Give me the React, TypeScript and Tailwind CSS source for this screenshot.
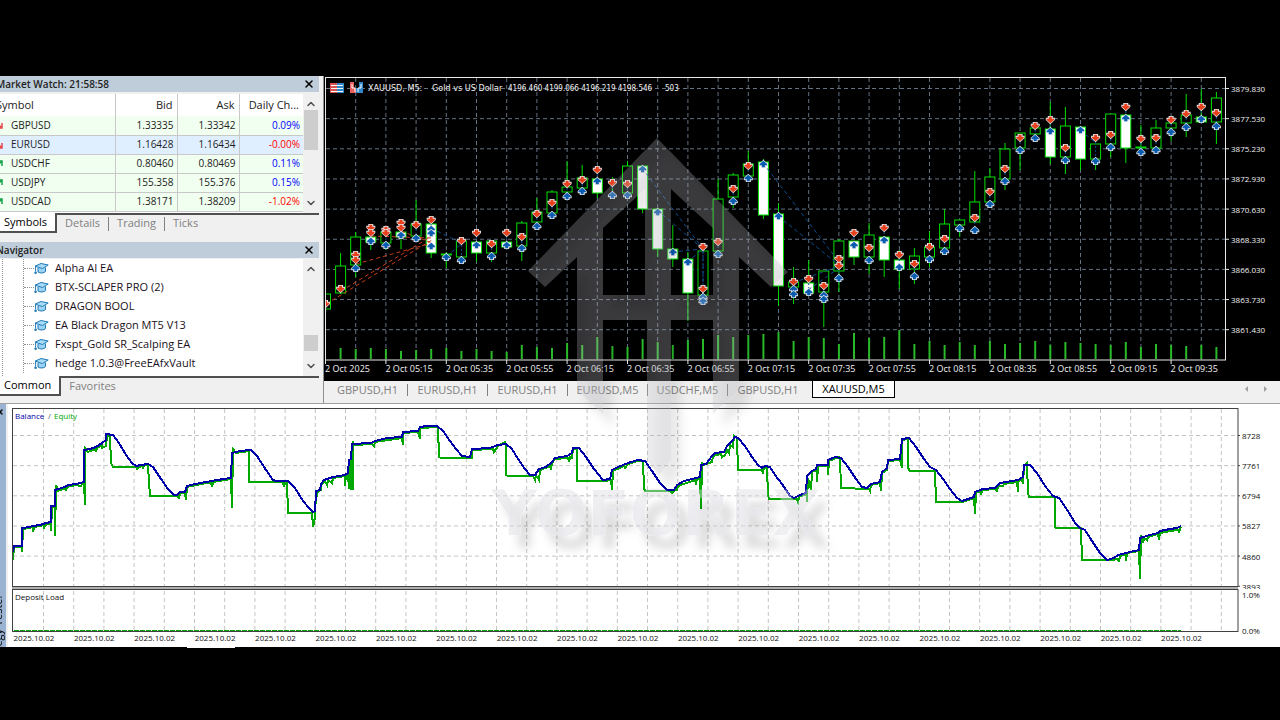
import React from 'react';
import { ChevronDown, ChevronUp, X } from 'lucide-react';
import clsx from 'clsx';

type Quote = { symbol: string; bid: string; ask: string; change: string; up: boolean; selected?: boolean };

const quotes: Quote[] = [
  { symbol: 'GBPUSD', bid: '1.33335', ask: '1.33342', change: '0.09%', up: false },
  { symbol: 'EURUSD', bid: '1.16428', ask: '1.16434', change: '-0.00%', up: false, selected: true },
  { symbol: 'USDCHF', bid: '0.80460', ask: '0.80469', change: '0.11%', up: true },
  { symbol: 'USDJPY', bid: '155.358', ask: '155.376', change: '0.15%', up: true },
  { symbol: 'USDCAD', bid: '1.38171', ask: '1.38209', change: '-1.02%', up: true },
];

const experts = [
  'Alpha AI EA',
  'BTX-SCLAPER PRO (2)',
  'DRAGON BOOL',
  'EA Black Dragon MT5 V13',
  'Fxspt_Gold SR_Scalping EA',
  'hedge 1.0.3@FreeEAfxVault',
];

const chartTabs = ['GBPUSD,H1', 'EURUSD,H1', 'EURUSD,H1', 'EURUSD,M5', 'USDCHF,M5', 'GBPUSD,H1', 'XAUUSD,M5'];

// high, body top, body bottom, low, filled, sell marks, buy marks
type Candle = [number, number, number, number, 0 | 1, number[], number[]];

const candles: Candle[] = [
  [294, 294, 309, 309, 0, [304], []],
  [253, 266, 293, 294, 0, [289], []],
  [232, 237, 265, 277, 0, [255, 260], [268]],
  [237, 237, 242, 250, 1, [228, 233], [241]],
  [232, 232, 243, 250, 0, [230, 233], [245]],
  [232, 232, 237, 249, 1, [223, 228], [235]],
  [200, 224, 236, 242, 0, [225], [238]],
  [224, 224, 253, 258, 1, [220], [229, 233, 246]],
  [252, 254, 255, 268, 0, [], [257]],
  [241, 241, 257, 257, 0, [241], [260]],
  [242, 242, 253, 262, 1, [233], [245]],
  [241, 241, 253, 262, 0, [244], [256]],
  [242, 242, 247, 247, 1, [233], [245]],
  [221, 223, 246, 261, 0, [237], [248]],
  [198, 212, 222, 222, 0, [214], [226]],
  [190, 192, 213, 217, 0, [203], [215]],
  [161, 187, 192, 192, 0, [184], [196]],
  [165, 178, 188, 188, 0, [180], [191]],
  [179, 179, 193, 198, 1, [170], [181]],
  [177, 191, 191, 191, 0, [183], [195]],
  [161, 166, 193, 193, 0, [184], [195]],
  [166, 166, 209, 213, 1, [], [169]],
  [209, 209, 249, 257, 1, [], [212]],
  [225, 249, 259, 267, 1, [], [252]],
  [252, 259, 293, 321, 1, [], [262]],
  [243, 251, 295, 300, 0, [247, 289], [297, 301]],
  [179, 199, 251, 251, 0, [242], [254]],
  [173, 175, 197, 208, 0, [189], [201]],
  [151, 164, 176, 176, 0, [166], [178]],
  [159, 162, 215, 219, 1, [], [164]],
  [203, 214, 286, 306, 1, [], [216]],
  [267, 282, 287, 304, 0, [282], [289, 294]],
  [260, 283, 293, 293, 1, [279], [292]],
  [271, 271, 292, 327, 0, [286], [295, 299]],
  [239, 241, 271, 292, 0, [259, 266], [278]],
  [241, 241, 257, 265, 1, [233], [245]],
  [223, 235, 257, 274, 0, [248], [260]],
  [237, 237, 260, 277, 1, [228], [240]],
  [250, 260, 269, 289, 1, [255], [267]],
  [248, 256, 269, 284, 0, [264], [276]],
  [231, 247, 257, 267, 0, [247], [259]],
  [209, 224, 248, 249, 0, [239], [251]],
  [220, 220, 225, 237, 0, [], [228]],
  [171, 202, 222, 222, 0, [218], [230]],
  [168, 177, 202, 202, 0, [192], [204]],
  [143, 149, 179, 190, 0, [169], [181]],
  [133, 133, 148, 170, 0, [138], [150]],
  [128, 128, 134, 134, 0, [126], [138]],
  [102, 129, 157, 164, 1, [120], [131]],
  [107, 126, 157, 174, 0, [148], [160]],
  [127, 127, 159, 170, 1, [], [130]],
  [144, 144, 159, 170, 0, [138], [161]],
  [114, 114, 144, 157, 0, [135], [147]],
  [115, 115, 148, 163, 1, [107], [118]],
  [125, 147, 148, 148, 0, [139], [152]],
  [120, 128, 148, 148, 0, [138], [150]],
  [123, 123, 128, 141, 0, [120], [132]],
  [94, 115, 123, 137, 0, [114], [127]],
  [89, 117, 122, 122, 1, [107], [119]],
  [92, 98, 122, 144, 0, [113], [126]],
];

const volumes = [
  0, 11, 10, 11, 10, 8, 9, 10, 11, 8, 10, 8, 7, 14, 12, 11, 16, 14, 22, 13, 12, 20, 17, 14, 19, 20, 24, 22, 24, 25,
  27, 18, 22, 21, 15, 26, 21, 22, 29, 15, 18, 14, 17, 14, 18, 15, 16, 18, 14, 17, 16, 15, 14, 17, 12, 15, 14, 13, 14, 12,
];

const prices = ['3879.830', '3877.530', '3875.230', '3872.930', '3870.630', '3868.330', '3866.030', '3863.730', '3861.430'];
const times = ['2025', '05:15', '05:35', '05:55', '06:15', '06:35', '06:55', '07:15', '07:35', '07:55', '08:15', '08:35', '08:55', '09:15', '09:35'];

const sellLines = ['326,304 432,240', '341,291 432,236', '356,264 432,243', '371,236 432,238', '401,231 432,243'];
const buyLines = ['431,228 463,244', '446,257 461,244', '642,168 703,249', '657,210 703,249', '672,252 703,249', '687,262 703,249', '703,250 703,298', '763,163 839,262', '778,216 839,265', '793,283 839,266', '808,290 839,268', '1080,130 1096,143'];

const balanceLine =
  '13,552 14,546 22,546 22,528 24,528 33,526 40,525 46,523 51,522 51,506 55,506 55,490 58,489 65,487 68,485 76,484 84,482 84,450 90,449 96,447 102,443 106,440 106,434 113,435 119,443 126,455 132,463 136,466 141,465 148,464 153,467 161,479 168,489 174,495 177,495 180,492 185,492 187,486 195,484 206,482 217,480 231,478 232,453 240,451 251,450 257,456 266,470 273,480 276,481 288,481 295,488 303,501 309,508 313,512 315,511 316,491 320,490 321,484 324,480 333,477 345,475 348,473 349,460 351,459 352,444 371,443 375,441 387,438 402,437 403,432 418,431 420,427 427,426 437,426 443,431 450,441 456,449 462,456 470,457 472,449 490,448 498,445 506,444 512,449 518,459 525,469 530,475 535,475 539,469 546,467 552,462 555,458 567,456 572,453 573,448 579,448 586,457 594,469 603,480 610,479 612,470 618,467 628,463 638,460 645,461 652,471 660,483 667,490 674,490 677,485 684,481 692,479 700,477 701,465 706,464 712,456 715,453 724,452 727,446 732,441 735,437 738,438 745,446 752,457 758,465 762,468 765,466 770,467 775,475 782,484 790,496 794,498 800,495 806,493 807,476 812,471 816,469 817,465 828,465 828,460 835,457 841,458 848,467 856,479 862,487 867,488 871,484 880,482 882,472 887,468 888,460 900,459 902,439 909,438 916,447 924,459 930,467 936,470 943,479 950,489 957,498 962,501 968,499 974,497 975,492 983,489 995,488 1000,483 1018,480 1023,477 1024,465 1030,465 1037,473 1045,486 1053,496 1059,498 1068,511 1075,523 1080,528 1085,530 1092,541 1100,553 1107,560 1114,558 1118,555 1130,552 1139,550 1140,538 1150,535 1158,533 1160,531 1170,529 1177,528 1181,526';

const equityLine =
  '13,560 14,547 22,547 22,552 23,529 33,527 33,532 34,527 44,525 44,529 45,525 51,523 51,531 52,507 55,507 55,536 56,485 58,491 66,488 66,491 67,487 76,485 81,486 82,484 84,483 85,505 85,448 88,452 96,449 96,452 97,448 102,445 102,448 106,446 107,436 110,436 111,463 113,467 137,467 137,470 138,467 143,466 143,469 144,465 148,465 149,482 150,496 178,496 179,499 180,493 185,493 186,500 187,487 206,483 211,483 212,487 213,482 231,479 232,508 233,449 236,453 249,451 249,482 283,482 284,487 285,482 287,482 288,513 312,513 313,527 315,517 316,492 317,495 318,491 321,490 321,485 325,481 327,485 328,480 332,483 333,478 345,476 345,486 346,475 348,474 349,489 349,460 351,460 351,489 353,489 353,441 354,445 372,444 374,446 375,442 402,438 403,445 403,433 418,432 420,439 420,428 438,427 439,457 441,458 472,458 472,450 493,449 494,452 498,446 505,442 506,446 506,475 508,476 533,476 535,480 536,475 539,480 540,470 551,466 551,470 552,463 555,459 568,458 569,462 570,457 572,458 573,449 577,449 577,481 604,481 611,480 612,490 613,471 624,466 625,468 628,464 638,461 643,461 644,488 645,491 670,491 672,493 675,490 677,490 678,486 695,480 696,483 697,479 700,478 701,509 702,462 703,465 712,462 713,456 721,454 722,457 725,455 727,450 729,453 730,445 733,447 734,436 737,438 738,470 762,470 763,474 764,467 767,468 768,495 769,499 797,499 798,502 799,497 807,494 807,502 808,478 811,490 812,472 817,470 817,482 818,466 828,466 828,475 829,461 839,457 840,458 841,488 869,489 870,491 871,485 880,483 881,491 882,473 887,470 888,461 900,460 902,468 902,440 908,439 908,468 910,471 935,471 936,502 962,502 968,500 974,498 975,514 976,493 980,491 981,495 982,490 996,489 997,492 998,486 1003,486 1004,484 1017,482 1018,492 1018,481 1022,480 1023,484 1024,466 1027,463 1028,493 1029,497 1055,497 1055,527 1056,528 1081,528 1082,560 1112,560 1118,559 1119,562 1120,556 1126,554 1126,561 1127,553 1139,551 1140,579 1141,535 1143,543 1144,538 1147,540 1148,537 1158,534 1159,540 1160,533 1170,531 1178,530 1179,532 1181,527';

const candleX = (i: number) => 325.5 + i * 15.1;
const range = (n: number) => Array.from({ length: n }, (_, i) => i);

const CapIcon = () => (
  <svg viewBox="0 0 15 13" className="h-[13px] w-[15px] shrink-0" aria-hidden="true">
    <path d="M4 6v4c2 1.500 6 1.300 7.500-.500V5.500" fill="#9bd3f5" stroke="#1f79b5" />
    <path d="M1 4.200 7 1.500 14.200 3 8.500 6.500Z" fill="#a9dcf8" stroke="#1f79b5" />
    <path d="M1.600 4.500v5" fill="none" stroke="#1f79b5" />
    <circle cx="1.600" cy="10.800" r="1.300" fill="#1f79b5" />
  </svg>
);

const TrendIcon = ({ up }: { up: boolean }) => (
  <svg viewBox="0 0 8 8" className="h-2 w-2 shrink-0" aria-hidden="true">
    <path
      d={up ? 'M1 7 7 1M2 1h5v5' : 'M1 1l6 6M2 7h5V2'}
      fill="none"
      stroke={up ? '#16a34a' : '#e5484d'}
      strokeWidth="1.5"
    />
  </svg>
);

const Mark = ({ x, y, buy }: { x: number; y: number; buy?: boolean }) => (
  <g transform={`translate(${x} ${y}) scale(1 ${buy ? -1 : 1})`}>
    <path d="M-2.500-4h5v1.800h2v2.200l-4.500 4.200-4.500-4.200v-2.200h2z" fill="#e4e9ee" />
    <path d="M-1.500-3.200h3v2h2.200v1.200l-3.700 3.200-3.700-3.200v-1.200h2.200z" fill={buy ? '#0a5cb0' : '#e8401c'} />
  </g>
);

const PanelTitle = ({ children }: { children: React.ReactNode }) => (
  <div className="flex h-4 items-center justify-between bg-[#bfcdda] px-1 text-[10px] font-semibold text-[#222]">
    <h2>{children}</h2>
    <button aria-label="Close panel">
      <X className="h-3 w-3 text-black" strokeWidth={3} />
    </button>
  </div>
);

const ScrollBar = ({ thumb }: { thumb: string }) => (
  <div className="flex w-4 shrink-0 flex-col items-center justify-between bg-[#f0f0f0] py-1">
    <ChevronUp className="h-3 w-3 text-[#505050]" strokeWidth={3} />
    <div className="flex w-full flex-1 flex-col px-px">
      <div className={clsx('w-full bg-[#cdcdcd]', thumb)} />
    </div>
    <ChevronDown className="h-3 w-3 text-[#505050]" strokeWidth={3} />
  </div>
);

const PanelTabs = ({ tabs }: { tabs: string[] }) => (
  <div className="flex h-5 items-start border-t-2 border-[#505050] text-[11px] leading-4 text-[#808080]">
    {tabs.map((tab, i) => (
      <React.Fragment key={tab}>
        {i > 1 && <span className="mt-0.5 h-3.5 w-px bg-[#808080]" />}
        <button
          className={clsx(
            i === 0 ? '-mt-0.5 h-5 border-b-2 border-r-2 border-[#505050] bg-white pl-3 pr-2 text-black' : 'h-4 px-2'
          )}
        >
          {tab}
        </button>
      </React.Fragment>
    ))}
  </div>
);

const MarketWatch = () => (
  <section className="flex flex-col">
    <PanelTitle>Market Watch: 21:58:58</PanelTitle>
    <div className="mt-0.5 flex h-[119px] overflow-hidden bg-white">
      <table className="flex-1 table-fixed border-collapse self-start text-[10px] text-[#222]">
        <thead>
          <tr className="h-[22px] text-[11px]">
            <th className="w-[123px] border-r border-[#c8c8c8] pl-1 text-left font-normal">Symbol</th>
            <th className="w-[62px] border-r border-[#c8c8c8] pr-1 text-right font-normal">Bid</th>
            <th className="w-[62px] border-r border-[#c8c8c8] pr-1 text-right font-normal">Ask</th>
            <th className="pr-1 text-right font-normal">Daily Ch...</th>
          </tr>
        </thead>
        <tbody>
          {quotes.map((q) => (
            <tr key={q.symbol} className={clsx('h-[19px] border-b border-[#c8c8c8]', q.selected ? 'bg-[#e0efff]' : 'bg-[#f0fff0]')}>
              <td className="border-r border-[#c8c8c8]">
                <span className="flex items-center gap-2 pl-[3px]">
                  <TrendIcon up={q.up} />
                  {q.symbol}
                </span>
              </td>
              <td className="border-r border-[#c8c8c8] pr-[3px] text-right">{q.bid}</td>
              <td className="border-r border-[#c8c8c8] pr-[3px] text-right">{q.ask}</td>
              <td className={clsx('pr-[3px] text-right', q.change.startsWith('-') ? 'text-[#ff0000]' : 'text-[#0000ff]')}>{q.change}</td>
            </tr>
          ))}
        </tbody>
      </table>
      <ScrollBar thumb="h-10" />
    </div>
    <PanelTabs tabs={['Symbols', 'Details', 'Trading', 'Ticks']} />
  </section>
);

const Navigator = () => (
  <section className="flex flex-col">
    <PanelTitle>Navigator</PanelTitle>
    <div className="mt-px flex h-[117px] bg-white">
      <ul className="ml-2.5 flex-1 border-l border-dotted border-[#909090] text-[11px] text-[#1a1020]">
        {experts.map((name) => (
          <li key={name} className="ml-5 flex h-[19px] items-center border-l border-dotted border-[#909090]">
            <span className="w-2.5 border-t border-dotted border-[#909090]" />
            <CapIcon />
            <span className="ml-1.5">{name}</span>
          </li>
        ))}
      </ul>
      <ScrollBar thumb="mt-15 h-4" />
    </div>
    <PanelTabs tabs={['Common', 'Favorites']} />
  </section>
);

const PriceChart = () => (
  <svg viewBox="324 76 956 305" className="block w-full bg-black" role="img" aria-label="XAUUSD M5 candlestick chart">
    <defs>
      <clipPath id="plot">
        <rect x="326" y="78" width="900" height="282" />
      </clipPath>
    </defs>
    <g stroke="#647282" strokeDasharray="4 3">
      {range(29).map((i) => (
        <line key={i} x1={355.7 + i * 30.2} x2={355.7 + i * 30.2} y1="78" y2="360" />
      ))}
      {prices.map((p, i) => (
        <line key={p} x1="326" x2="1226" y1={88.5 + i * 30.15} y2={88.5 + i * 30.15} />
      ))}
    </g>
    <g clipPath="url(#plot)">
      {volumes.map((v, i) => (
        <rect key={i} x={candleX(i) - 1} y={359 - v} width="2" height={v} fill="#28b828" />
      ))}
      {candles.map(([high, top, bottom, low, filled], i) => (
        <g key={i} stroke="#00e000">
          <line x1={candleX(i)} x2={candleX(i)} y1={high} y2={top} />
          <line x1={candleX(i)} x2={candleX(i)} y1={bottom} y2={low} />
          <rect x={candleX(i) - 5} y={top} width="10" height={bottom - top} fill={filled ? '#ffffff' : '#000000'} />
        </g>
      ))}
      <g fill="none" stroke="#c83c18" strokeDasharray="4 3">
        {sellLines.map((p) => (
          <polyline key={p} points={p} />
        ))}
      </g>
      <g fill="none" stroke="#0a4c8c" strokeDasharray="4 3">
        {buyLines.map((p) => (
          <polyline key={p} points={p} />
        ))}
      </g>
      {candles.map(([, , , , , sells, buys], i) => (
        <g key={i}>
          {sells.length > 0 && buys.length > 0 && (
            <line x1={candleX(i)} x2={candleX(i)} y1={sells[0]} y2={buys[0]} stroke="#0a4c8c" strokeDasharray="2 2" />
          )}
          {sells.map((y) => (
            <Mark key={y} x={candleX(i)} y={y} />
          ))}
          {buys.map((y) => (
            <Mark key={y} x={candleX(i)} y={y} buy />
          ))}
        </g>
      ))}
    </g>
    <rect x="325.500" y="77.500" width="900" height="282.500" fill="none" stroke="#e8e8e8" />
    <g>
      <rect x="330" y="83" width="7" height="10" fill="#d9534f" />
      <rect x="337" y="83" width="7" height="10" fill="#2f86c8" />
      <path d="M331 85.500h12M331 88.500h12M331 91.500h12" stroke="#fff" />
      <path d="M350 82h4v6h3v5h-7z" fill="#e8605c" />
      <path d="M363 82h-4v6h-3v5h7z" fill="#2f86c8" />
      <path d="M352 84v4h3v4M361 84v4h-3v4" fill="none" stroke="#fff" />
    </g>
    <g fill="#f0f0f0" className="font-['DejaVu_Sans_Condensed','DejaVu_Sans',sans-serif] text-[9px]">
      <text x="368" y="91">XAUUSD, M5:</text>
      <text x="432" y="91">Gold vs US Dollar</text>
      <text x="508" y="91" className="text-[8px]">4196.460 4199.066 4196.219 4198.546</text>
      <text x="665" y="91" className="text-[8px]">503</text>
    </g>
    <g fill="#f0f0f0">
      {prices.map((p, i) => (
        <React.Fragment key={p}>
          <line x1="1226" x2="1229" y1={88.5 + i * 30.15} y2={88.5 + i * 30.15} stroke="#e8e8e8" />
          <text x="1231" y={92 + i * 30.15} className="text-[8px]">{p}</text>
        </React.Fragment>
      ))}
      {times.map((t, i) => (
        <React.Fragment key={t}>
          <line x1={325.5 + i * 60.4} x2={325.5 + i * 60.4} y1="360" y2="364" stroke="#e8e8e8" />
          <text x={325 + i * 60.4} y="372" className="text-[9px]">2 Oct {t}</text>
        </React.Fragment>
      ))}
    </g>
  </svg>
);

const ChartTabs = () => (
  <div className="flex h-[22px] items-start justify-between bg-[#f0f0f0] text-[11px] leading-4 text-[#808080]">
    <nav className="flex items-start pl-1">
      {chartTabs.map((tab, i) => {
        const active = i === chartTabs.length - 1;
        return (
          <button
            key={i}
            className={clsx(
              'flex h-[17px] items-center justify-center',
              active ? 'ml-1 w-[83px] border border-t-0 border-black bg-white text-black' : 'w-20'
            )}
          >
            <span className="flex-1">{tab}</span>
            {i < chartTabs.length - 2 && <span className="h-3 w-px bg-[#808080]" />}
          </button>
        );
      })}
    </nav>
    <div className="flex gap-4 pr-3 pt-1">
      <button aria-label="Scroll tabs left">
        <svg viewBox="0 0 4 8" className="h-2 w-1" fill="#a0a0a0"><path d="M4 1v6L1 4z" /></svg>
      </button>
      <button aria-label="Scroll tabs right">
        <svg viewBox="0 0 4 8" className="h-2 w-1" fill="#a0a0a0"><path d="M0 1v6l3-3z" /></svg>
      </button>
    </div>
  </div>
);

const TesterChart = () => (
  <svg viewBox="8 404 1272 243" className="block w-full bg-white" role="img" aria-label="Balance and equity graph">
    <g stroke="#c4c4c4" strokeDasharray="4 3">
      {range(40).map((i) => (
        <line key={i} x1={43.5 + i * 30.2} x2={43.5 + i * 30.2} y1="409" y2="631" />
      ))}
      {range(5).map((i) => (
        <line key={i} x1="13" x2="1238" y1={435.5 + i * 30.15} y2={435.5 + i * 30.15} />
      ))}
    </g>
    <rect x="12" y="586" width="1226" height="4" fill="#b0b0b0" />
    <g fill="none" strokeWidth="2" shapeRendering="crispEdges">
      <polyline points={equityLine} stroke="#00a800" />
      <polyline points={balanceLine} stroke="#0000a8" />
    </g>
    <line x1="14" x2="1181" y1="630.500" y2="630.500" stroke="#00a800" strokeDasharray="5 1" />
    <g fill="none" stroke="#404040">
      <rect x="12.500" y="408.500" width="1225.500" height="178" />
      <rect x="12.500" y="589.500" width="1225.500" height="42" />
    </g>
    <g fill="#101010" className="text-[8px] font-medium">
      <text x="15" y="419" fill="#0000a8">Balance</text>
      <text x="48" y="419" fill="#606060">/</text>
      <text x="54" y="419" fill="#00a800">Equity</text>
      <text x="15" y="600">Deposit Load</text>
      {['8728', '7761', '6794', '5827', '4860', '3893'].map((v, i) => (
        <React.Fragment key={v}>
          <line x1="1238" x2="1240" y1={435.5 + i * 30.15} y2={435.5 + i * 30.15} stroke="#404040" />
          <text x="1242" y={439 + i * 30.15}>{v}</text>
        </React.Fragment>
      ))}
      <rect x="1241" y="589" width="26" height="10" fill="#ffffff" />
      <text x="1242" y="598">1.0%</text>
      <text x="1242" y="634">0.0%</text>
      {range(20).map((i) => (
        <text key={i} x={13.5 + i * 60.4} y="641">2025.10.02</text>
      ))}
    </g>
  </svg>
);

const Watermark = () => (
  <svg
    viewBox="0 0 340 430"
    className="pointer-events-none absolute left-[38.500%] top-15 w-[26.560%] overflow-visible"
    aria-hidden="true"
  >
    <defs>
      <filter id="shade" x="-20%" y="-20%" width="140%" height="160%">
        <feDropShadow dx="10" dy="13" stdDeviation="5" floodColor="#000000" floodOpacity="0.3" />
      </filter>
    </defs>
    <g transform="translate(-493 -136)">
      <path
        d="M657 138 788 272 771 287 739 257V390L713 414V320H671V460L659 475 647 460V320H603V414L577 390V257L545 287 528 271ZM645 189 603 228V295H645ZM671 189V295H713V228Z"
        fill="#bcbcc2"
        fillOpacity="0.28"
        fillRule="evenodd"
        filter="url(#shade)"
      />
      <text
        x="492"
        y="535"
        fill="#dcdce2"
        fillOpacity="0.45"
        filter="url(#shade)"
        className="font-['DejaVu_Sans',sans-serif] text-[62px] font-bold"
      >
        YOFOREX
      </text>
    </g>
  </svg>
);

export default function App() {
  return (
    <div className="min-h-screen overflow-x-hidden bg-black pt-[76px] font-['Open_Sans',sans-serif]">
      <main className="relative">
        <div className="flex items-stretch border-b border-[#a0a0a0] bg-[#f0f0f0]">
          <aside className="w-[323px] shrink-0 overflow-hidden pr-1">
            <div className="-ml-2 flex flex-col gap-[9px]">
              <MarketWatch />
              <Navigator />
            </div>
          </aside>
          <div className="min-w-0 flex-1 border-l border-[#909090]">
            <PriceChart />
            <ChartTabs />
          </div>
        </div>
        <div className="flex bg-white">
          <div className="flex w-2 shrink-0 flex-col items-start justify-between overflow-hidden border-r-2 border-[#f0f0f0] bg-[#9ab3d3] text-[11px]">
            <button aria-label="Close tester" className="-ml-1 mt-1">
              <X className="h-2 w-2" strokeWidth={4} />
            </button>
            <span className="-mb-6 -ml-2 rotate-180 leading-3 [writing-mode:vertical-rl]">Strategy Tester</span>
          </div>
          <div className="min-w-0 flex-1">
            <TesterChart />
          </div>
        </div>
        <Watermark />
      </main>
      <div className="ml-[187px] h-px w-12 bg-white" />
    </div>
  );
}
